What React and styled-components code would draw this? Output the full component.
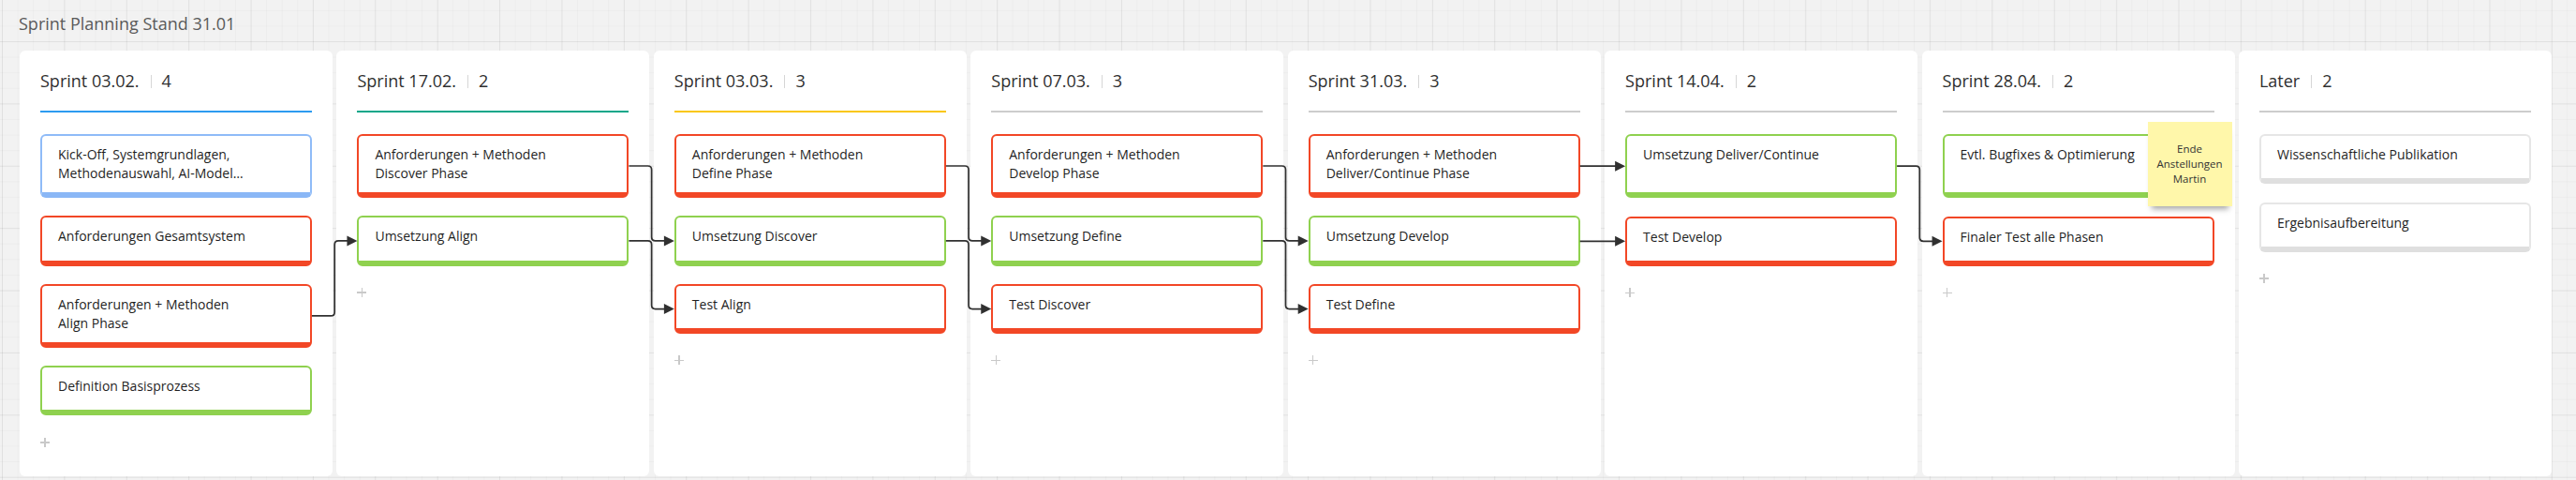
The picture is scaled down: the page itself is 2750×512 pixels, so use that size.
import React, { useLayoutEffect, useRef, useState, useCallback } from 'react';
import styled, { createGlobalStyle } from 'styled-components';

const GlobalStyle = createGlobalStyle`
  html, body { margin: 0; padding: 0; }
  body {
    width: 2750px;
    height: 512px;
    overflow: hidden;
    background-color: #f2f2f2;
    background-image:
      linear-gradient(to right, rgba(0,0,0,0.05) 1px, transparent 1px),
      linear-gradient(to bottom, rgba(0,0,0,0.05) 1px, transparent 1px),
      linear-gradient(to right, rgba(0,0,0,0.022) 1px, transparent 1px),
      linear-gradient(to bottom, rgba(0,0,0,0.022) 1px, transparent 1px);
    background-size: 66.4px 66.4px, 66.4px 66.4px, 16.6px 16.6px, 16.6px 16.6px;
    background-position: 2px 44px, 2px 44px, 2px 44px, 2px 44px;
    font-family: "Open Sans", "Noto Sans", sans-serif;
  }
`;

const TONES = {
  red: { side: '#f24726', bottom: '#f24726' },
  green: { side: '#8fd14f', bottom: '#8fd14f' },
  blue: { side: '#8fbbf8', bottom: '#8ab7f6' },
  gray: { side: '#e6e6e6', bottom: '#dfdfdf' },
};

const Page = styled.div`
  padding: 13px 0 0 21px;
`;

const Title = styled.h1`
  margin: 0 0 17px -1px;
  font-size: 18px;
  line-height: 24px;
  font-weight: 400;
  color: #5a5a5a;
`;

const Board = styled.div`
  position: relative;
  display: flex;
  gap: 4.43px;
  width: 2703px;
  height: 454px;
`;

const Column = styled.section`
  position: relative;
  flex: 1 1 0;
  min-width: 0;
  background: #ffffff;
  border-radius: 6px;
  padding: 20px 22px 0;
  box-sizing: border-box;
  display: flex;
  flex-direction: column;
`;

const Header = styled.div`
  display: flex;
  align-items: center;
  height: 24px;
  font-size: 18px;
  line-height: 24px;
  color: #303030;
`;

const HeaderBar = styled.span`
  width: 1px;
  height: 14px;
  background: #d6d6d6;
  margin: 1px 11px 0 12px;
`;

const Accent = styled.div`
  height: 2px;
  margin-top: 20px;
  background: ${(p) => p.$color};
`;

const CardList = styled.div`
  margin-top: 23px;
  display: flex;
  flex-direction: column;
  gap: 19.3px;
`;

const Card = styled.div`
  box-sizing: border-box;
  min-height: ${(p) => (p.$tall ? '68.4px' : '53.3px')};
  background: #ffffff;
  border: 2px solid ${(p) => TONES[p.$tone].side};
  border-bottom: 6px solid ${(p) => TONES[p.$tone].bottom};
  border-radius: 6px;
  padding: 10px 17px 10px;
  font-size: 14px;
  line-height: 20px;
  color: #1f1f1f;
`;

const Line = styled.span`
  display: block;
  white-space: nowrap;
`;

const AddButton = styled.div`
  position: relative;
  width: 10px;
  height: 10px;
  margin-top: 4px;
  &::before, &::after {
    content: '';
    position: absolute;
    background: #c9c9c9;
  }
  &::before { left: 0; right: 0; top: 4.25px; height: 1.5px; }
  &::after { top: 0; bottom: 0; left: 4.25px; width: 1.5px; }
`;

const Sticky = styled.div`
  position: absolute;
  z-index: 3;
  top: 76px;
  right: 3px;
  width: 90px;
  height: 90px;
  background: #fff7aa;
  box-shadow: 0 7px 6px -4px rgba(0, 0, 0, 0.35);
  display: flex;
  flex-direction: column;
  align-items: center;
  justify-content: center;
  font-size: 11.5px;
  line-height: 16px;
  color: #333333;
  text-align: center;
`;

const Connectors = styled.svg`
  position: absolute;
  inset: 0;
  width: 100%;
  height: 100%;
  overflow: visible;
  pointer-events: none;
  z-index: 2;
`;

const columns = [
  {
    title: 'Sprint 03.02.', count: 4, accent: '#2d9bf0',
    cards: [
      { id: 'a1', tone: 'blue', lines: ['Kick-Off, Systemgrundlagen,', 'Methodenauswahl, AI-Model…'] },
      { id: 'a2', tone: 'red', lines: ['Anforderungen Gesamtsystem'] },
      { id: 'a3', tone: 'red', lines: ['Anforderungen + Methoden', 'Align Phase'] },
      { id: 'a4', tone: 'green', lines: ['Definition Basisprozess'] },
    ],
  },
  {
    title: 'Sprint 17.02.', count: 2, accent: '#0ca789',
    cards: [
      { id: 'b1', tone: 'red', lines: ['Anforderungen + Methoden', 'Discover Phase'] },
      { id: 'b2', tone: 'green', lines: ['Umsetzung Align'] },
    ],
  },
  {
    title: 'Sprint 03.03.', count: 3, accent: '#fac710',
    cards: [
      { id: 'c1', tone: 'red', lines: ['Anforderungen + Methoden', 'Define Phase'] },
      { id: 'c2', tone: 'green', lines: ['Umsetzung Discover'] },
      { id: 'c3', tone: 'red', lines: ['Test Align'] },
    ],
  },
  {
    title: 'Sprint 07.03.', count: 3, accent: '#cdcdcd',
    cards: [
      { id: 'd1', tone: 'red', lines: ['Anforderungen + Methoden', 'Develop Phase'] },
      { id: 'd2', tone: 'green', lines: ['Umsetzung Define'] },
      { id: 'd3', tone: 'red', lines: ['Test Discover'] },
    ],
  },
  {
    title: 'Sprint 31.03.', count: 3, accent: '#cdcdcd',
    cards: [
      { id: 'e1', tone: 'red', lines: ['Anforderungen + Methoden', 'Deliver/Continue Phase'] },
      { id: 'e2', tone: 'green', lines: ['Umsetzung Develop'] },
      { id: 'e3', tone: 'red', lines: ['Test Define'] },
    ],
  },
  {
    title: 'Sprint 14.04.', count: 2, accent: '#cdcdcd',
    cards: [
      { id: 'f1', tone: 'green', tall: true, lines: ['Umsetzung Deliver/Continue'] },
      { id: 'f2', tone: 'red', lines: ['Test Develop'] },
    ],
  },
  {
    title: 'Sprint 28.04.', count: 2, accent: '#cdcdcd', sticky: ['Ende', 'Anstellungen', 'Martin'],
    cards: [
      { id: 'g1', tone: 'green', tall: true, lines: ['Evtl. Bugfixes & Optimierung'] },
      { id: 'g2', tone: 'red', lines: ['Finaler Test alle Phasen'] },
    ],
  },
  {
    title: 'Later', count: 2, accent: '#cdcdcd',
    cards: [
      { id: 'h1', tone: 'gray', lines: ['Wissenschaftliche Publikation'] },
      { id: 'h2', tone: 'gray', lines: ['Ergebnisaufbereitung'] },
    ],
  },
];

const links = [
  ['a3', 'b2'],
  ['b1', 'c2'],
  ['b2', 'c3'],
  ['c1', 'd2'],
  ['c2', 'd3'],
  ['d1', 'e2'],
  ['d2', 'e3'],
  ['e1', 'f1'],
  ['e2', 'f2'],
  ['f1', 'g2'],
];

function buildPath(x1, y1, x2, y2) {
  const xe = x2 - 10;
  if (Math.abs(y1 - y2) < 1.5) return `M${x1},${y1} H${xe}`;
  const xm = (x1 + x2) / 2;
  const r = 4;
  const d = y2 > y1 ? 1 : -1;
  return `M${x1},${y1} H${xm - r} Q${xm},${y1} ${xm},${y1 + d * r} V${y2 - d * r} Q${xm},${y2} ${xm + r},${y2} H${xe}`;
}

export default function App() {
  const boardRef = useRef(null);
  const cardRefs = useRef({});
  const [paths, setPaths] = useState([]);

  const measure = useCallback(() => {
    const board = boardRef.current;
    if (!board) return;
    const b = board.getBoundingClientRect();
    const next = links.map(([from, to]) => {
      const s = cardRefs.current[from].getBoundingClientRect();
      const t = cardRefs.current[to].getBoundingClientRect();
      const x1 = s.right - b.left;
      const y1 = s.top + s.height / 2 - b.top;
      const x2 = t.left - b.left;
      let y2 = t.top + t.height / 2 - b.top;
      const yy1 = Math.abs(y1 - y2) < 1.5 ? y2 : y1;
      return { key: `${from}-${to}`, d: buildPath(x1, yy1, x2, y2), x2, y2 };
    });
    setPaths(next);
  }, []);

  useLayoutEffect(() => {
    measure();
    if (document.fonts && document.fonts.ready) document.fonts.ready.then(measure);
  }, [measure]);

  return (
    <>
      <GlobalStyle />
      <Page>
        <Title>Sprint Planning Stand 31.01</Title>
        <Board ref={boardRef}>
          {columns.map((col) => (
            <Column key={col.title}>
              <Header>
                {col.title}
                <HeaderBar />
                {col.count}
              </Header>
              <Accent $color={col.accent} />
              <CardList>
                {col.cards.map((card) => (
                  <Card
                    key={card.id}
                    ref={(el) => { cardRefs.current[card.id] = el; }}
                    $tone={card.tone}
                    $tall={card.tall}
                  >
                    {card.lines.map((l) => <Line key={l}>{l}</Line>)}
                  </Card>
                ))}
                <AddButton />
              </CardList>
              {col.sticky && (
                <Sticky>
                  {col.sticky.map((l) => <span key={l}>{l}</span>)}
                </Sticky>
              )}
            </Column>
          ))}
          <Connectors>
            {paths.map((p) => (
              <g key={p.key}>
                <path d={p.d} fill="none" stroke="#303030" strokeWidth="1.7" />
                <polygon
                  points={`${p.x2},${p.y2} ${p.x2 - 11},${p.y2 - 5.5} ${p.x2 - 11},${p.y2 + 5.5}`}
                  fill="#303030"
                />
              </g>
            ))}
          </Connectors>
        </Board>
      </Page>
    </>
  );
}
